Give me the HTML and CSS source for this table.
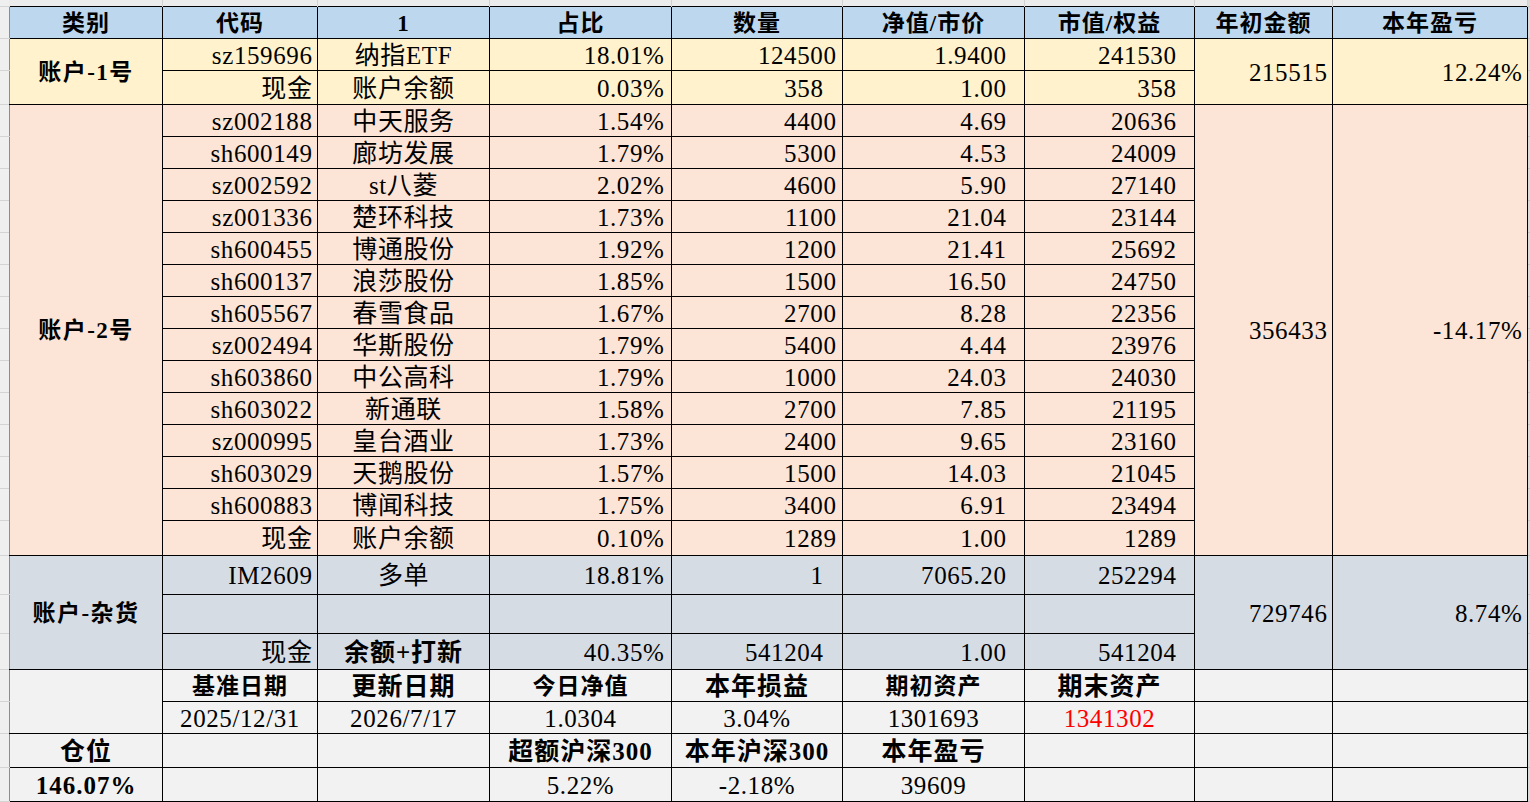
FILE: index.html
```html
<!DOCTYPE html>
<html lang="zh-CN">
<head>
<meta charset="utf-8">
<title>账户持仓</title>
<link rel="stylesheet" href="styles.css">
</head>
<body>
<table class="sheet">
  <colgroup>
    <col class="w-gut"><col class="w-1"><col class="w-2"><col class="w-3"><col class="w-4"><col class="w-5"><col class="w-6"><col class="w-7"><col class="w-8"><col class="w-9"><col class="w-rg">
  </colgroup>
  <tbody>
    <tr class="strip">
      <td class="gut"></td><td></td><td></td><td></td><td></td><td></td><td></td><td></td><td></td><td></td><td class="rg"></td>
    </tr>
    <tr class="head h32">
      <td class="gut"></td>
      <th class="first">类别</th><th>代码</th><th>1</th><th>占比</th><th>数量</th><th>净值/市价</th><th>市值/权益</th><th>年初金额</th><th>本年盈亏</th>
      <td class="rg"></td>
    </tr>

    <tr class="acc1 h32">
      <td class="gut"></td>
      <td class="first label" rowspan="2">账户-1号</td>
      <td class="code">sz159696</td><td class="name">纳指ETF</td><td class="pct">18.01%</td><td class="qty">124500</td><td class="px">1.9400</td><td class="mv">241530</td>
      <td class="sum" rowspan="2">215515</td><td class="sum" rowspan="2">12.24%</td>
      <td class="rg"></td>
    </tr>
    <tr class="acc1 h34">
      <td class="gut"></td>
      <td class="code">现金</td><td class="name">账户余额</td><td class="pct">0.03%</td><td class="qty sp">358</td><td class="px">1.00</td><td class="mv">358</td>
      <td class="rg"></td>
    </tr>

    <tr class="acc2 h32">
      <td class="gut"></td>
      <td class="first label" rowspan="14">账户-2号</td>
      <td class="code">sz002188</td><td class="name">中天服务</td><td class="pct">1.54%</td><td class="qty">4400</td><td class="px">4.69</td><td class="mv">20636</td>
      <td class="sum" rowspan="14">356433</td><td class="sum" rowspan="14">-14.17%</td>
      <td class="rg"></td>
    </tr>
    <tr class="acc2 h32"><td class="gut"></td><td class="code">sh600149</td><td class="name">廊坊发展</td><td class="pct">1.79%</td><td class="qty">5300</td><td class="px">4.53</td><td class="mv">24009</td><td class="rg"></td></tr>
    <tr class="acc2 h32"><td class="gut"></td><td class="code">sz002592</td><td class="name">st八菱</td><td class="pct">2.02%</td><td class="qty">4600</td><td class="px">5.90</td><td class="mv">27140</td><td class="rg"></td></tr>
    <tr class="acc2 h32"><td class="gut"></td><td class="code">sz001336</td><td class="name">楚环科技</td><td class="pct">1.73%</td><td class="qty">1100</td><td class="px">21.04</td><td class="mv">23144</td><td class="rg"></td></tr>
    <tr class="acc2 h32"><td class="gut"></td><td class="code">sh600455</td><td class="name">博通股份</td><td class="pct">1.92%</td><td class="qty">1200</td><td class="px">21.41</td><td class="mv">25692</td><td class="rg"></td></tr>
    <tr class="acc2 h32"><td class="gut"></td><td class="code">sh600137</td><td class="name">浪莎股份</td><td class="pct">1.85%</td><td class="qty">1500</td><td class="px">16.50</td><td class="mv">24750</td><td class="rg"></td></tr>
    <tr class="acc2 h32"><td class="gut"></td><td class="code">sh605567</td><td class="name">春雪食品</td><td class="pct">1.67%</td><td class="qty">2700</td><td class="px">8.28</td><td class="mv">22356</td><td class="rg"></td></tr>
    <tr class="acc2 h32"><td class="gut"></td><td class="code">sz002494</td><td class="name">华斯股份</td><td class="pct">1.79%</td><td class="qty">5400</td><td class="px">4.44</td><td class="mv">23976</td><td class="rg"></td></tr>
    <tr class="acc2 h32"><td class="gut"></td><td class="code">sh603860</td><td class="name">中公高科</td><td class="pct">1.79%</td><td class="qty">1000</td><td class="px">24.03</td><td class="mv">24030</td><td class="rg"></td></tr>
    <tr class="acc2 h32"><td class="gut"></td><td class="code">sh603022</td><td class="name">新通联</td><td class="pct">1.58%</td><td class="qty">2700</td><td class="px">7.85</td><td class="mv">21195</td><td class="rg"></td></tr>
    <tr class="acc2 h32"><td class="gut"></td><td class="code">sz000995</td><td class="name">皇台酒业</td><td class="pct">1.73%</td><td class="qty">2400</td><td class="px">9.65</td><td class="mv">23160</td><td class="rg"></td></tr>
    <tr class="acc2 h32"><td class="gut"></td><td class="code">sh603029</td><td class="name">天鹅股份</td><td class="pct">1.57%</td><td class="qty">1500</td><td class="px">14.03</td><td class="mv">21045</td><td class="rg"></td></tr>
    <tr class="acc2 h32"><td class="gut"></td><td class="code">sh600883</td><td class="name">博闻科技</td><td class="pct">1.75%</td><td class="qty">3400</td><td class="px">6.91</td><td class="mv">23494</td><td class="rg"></td></tr>
    <tr class="acc2 h35"><td class="gut"></td><td class="code">现金</td><td class="name">账户余额</td><td class="pct">0.10%</td><td class="qty">1289</td><td class="px">1.00</td><td class="mv">1289</td><td class="rg"></td></tr>

    <tr class="acc3 h39">
      <td class="gut"></td>
      <td class="first label" rowspan="3">账户-杂货</td>
      <td class="code">IM2609</td><td class="name">多单</td><td class="pct">18.81%</td><td class="qty sp">1</td><td class="px">7065.20</td><td class="mv">252294</td>
      <td class="sum" rowspan="3">729746</td><td class="sum" rowspan="3">8.74%</td>
      <td class="rg"></td>
    </tr>
    <tr class="acc3 h39"><td class="gut"></td><td></td><td></td><td></td><td></td><td></td><td></td><td class="rg"></td></tr>
    <tr class="acc3 h36"><td class="gut"></td><td class="code">现金</td><td class="name bold">余额+打新</td><td class="pct">40.35%</td><td class="qty sp">541204</td><td class="px">1.00</td><td class="mv">541204</td><td class="rg"></td></tr>

    <tr class="summ h32">
      <td class="gut"></td>
      <td class="first" rowspan="2"></td>
      <td class="lbl sm">基准日期</td><td class="lbl">更新日期</td><td class="lbl sm">今日净值</td><td class="lbl">本年损益</td><td class="lbl sm">期初资产</td><td class="lbl">期末资产</td><td></td><td></td>
      <td class="rg"></td>
    </tr>
    <tr class="summ h32">
      <td class="gut"></td>
      <td class="val">2025/12/31</td><td class="val">2026/7/17</td><td class="val">1.0304</td><td class="val">3.04%</td><td class="val">1301693</td><td class="val red">1341302</td><td></td><td></td>
      <td class="rg"></td>
    </tr>
    <tr class="summ h34">
      <td class="gut"></td>
      <td class="first lbl">仓位</td><td></td><td></td><td class="lbl">超额沪深300</td><td class="lbl">本年沪深300</td><td class="lbl">本年盈亏</td><td></td><td></td><td></td>
      <td class="rg"></td>
    </tr>
    <tr class="summ h34">
      <td class="gut"></td>
      <td class="first lbl">146.07%</td><td></td><td></td><td class="val">5.22%</td><td class="val">-2.18%</td><td class="val">39609</td><td></td><td></td><td></td>
      <td class="rg"></td>
    </tr>
  </tbody>
</table>
</body>
</html>
```

FILE: styles.css
```css
html, body {
  margin: 0;
  padding: 0;
  background: #efefef;
}

body {
  width: 1530px;
  height: 802px;
  overflow: hidden;
  font-family: "Liberation Serif", "Noto Sans CJK SC", serif;
  color: #000;
}

.sheet {
  border-collapse: collapse;
  table-layout: fixed;
  width: 1530px;
}

.w-gut { width: 9px; }
.w-1 { width: 153px; }
.w-2 { width: 155px; }
.w-3 { width: 172px; }
.w-4 { width: 182px; }
.w-5 { width: 171px; }
.w-6 { width: 182px; }
.w-7 { width: 170px; }
.w-8 { width: 138px; }
.w-9 { width: 195px; }
.w-rg { width: 3px; }

.sheet td,
.sheet th {
  border: 1px solid #000;
  padding: 2px 4px 0 5px;
  font-size: 25px;
  font-weight: 400;
  line-height: 1;
  letter-spacing: 0.6px;
  white-space: nowrap;
  overflow: hidden;
  vertical-align: middle;
}

.strip { height: 6px; }
.strip td {
  background: #ececec;
  border: none;
  border-right: 1px solid #d2d2d2;
  padding: 0;
}

.sheet td.gut {
  background: #efefef;
  border: none;
  border-bottom: 1px solid #d4d4d4;
  padding: 0;
}

.sheet td.rg {
  background: #dadada;
  border: none;
  border-bottom: 1px solid #c4c4c4;
  padding: 0;
}

.sheet .first { border-left: 1px solid #8c8c8c; }

.h32 { height: 32px; }
.h34 { height: 34px; }
.h35 { height: 35px; }
.h36 { height: 36px; }
.h39 { height: 39px; }

.head th {
  background: #bdd7ee;
  font-size: 23px;
  font-weight: 700;
  letter-spacing: 1px;
  text-align: center;
}

.acc1 td { background: #fff2cc; }
.acc2 td { background: #fce4d6; }
.acc3 td { background: #d6dce4; }
.summ td { background: #f2f2f2; }

.sheet td.label {
  text-align: center;
  font-size: 23px;
  font-weight: 700;
  letter-spacing: 1.5px;
}

.code { text-align: right; }
.name { text-align: center; }
.sheet td.pct { text-align: right; padding-right: 6px; }
.sheet td.qty { text-align: right; padding-right: 5px; }
.sheet td.sp { padding-right: 18px; }
.sheet td.px { text-align: right; padding-right: 17px; }
.sheet td.mv { text-align: right; padding-right: 17px; }
.sheet td.sum { text-align: right; padding-right: 4px; }

.sheet td.bold { font-weight: 700; letter-spacing: 1px; }

.sheet td.lbl {
  text-align: center;
  font-weight: 700;
  letter-spacing: 1px;
}
.sheet td.sm { font-size: 23px; }
.val { text-align: center; }
.red { color: #ff0000; }
```
